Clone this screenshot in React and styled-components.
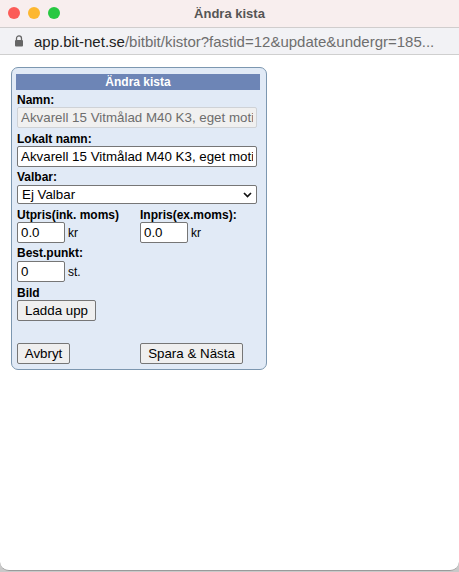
import styled, { createGlobalStyle } from "styled-components";

const GlobalStyle = createGlobalStyle`
  html, body {
    margin: 0;
    padding: 0;
    background: #c9c9c9;
  }
`;

const Window = styled.div`
  width: 459px;
  height: 571px;
  background: #fff;
  border-radius: 0 0 9px 9px;
  border-bottom: 1px solid #9a9a9a;
  box-sizing: border-box;
  overflow: hidden;
  font-family: "Liberation Sans", Arial, sans-serif;
`;

const TitleBar = styled.div`
  position: relative;
  height: 27px;
  background: #f8eeee;
  border-bottom: 1px solid #d0cdcd;
  display: flex;
  align-items: center;
  justify-content: center;
  font-size: 13px;
  font-weight: 700;
  color: #555;
`;

const Lights = styled.div`
  position: absolute;
  left: 8px;
  top: 7px;
  display: flex;
  gap: 8px;
`;

const Light = styled.span`
  width: 12px;
  height: 12px;
  border-radius: 50%;
  background: ${(props) => props.color};
`;

const UrlBar = styled.div`
  height: 27px;
  background: #f2f2f5;
  border-bottom: 1px solid #cfcfcf;
  box-sizing: border-box;
  display: flex;
  align-items: center;
  padding-left: 14px;
  gap: 10px;
  font-size: 15px;
  color: #6e6e6e;
  white-space: nowrap;
`;

const Host = styled.span`
  color: #222;
`;

const Content = styled.div`
  padding: 12px 11px;
`;

const Panel = styled.form`
  width: 256px;
  height: 303px;
  box-sizing: border-box;
  background: #e1eaf6;
  border: 1px solid #7c97b0;
  border-radius: 7px;
  padding: 6px 6px 0 4px;
  font-size: 12px;
  color: #000;
`;

const Heading = styled.div`
  height: 16px;
  line-height: 16px;
  background: #6d85b6;
  color: #fff;
  font-weight: 700;
  text-align: center;
`;

const Label = styled.div`
  font-weight: 700;
  line-height: 13px;
  margin-top: ${(props) => props.$top}px;
  margin-bottom: ${(props) => props.$bottom || 0}px;
  padding-left: 1px;
`;

const TextField = styled.input`
  display: block;
  box-sizing: border-box;
  width: 240px;
  height: 21px;
  margin: 0 0 0 1px;
  padding: 0 3px;
  font: 13.33px "Liberation Sans", Arial, sans-serif;
  color: #000;
  background: #fff;
  border: 1px solid #767676;
  border-radius: 2px;

  &:disabled {
    color: #6d6d6d;
    background: #f0f0f0;
    border-color: #cfd2d6;
  }
`;

const Select = styled.div`
  box-sizing: border-box;
  display: flex;
  align-items: center;
  justify-content: space-between;
  width: 240px;
  height: 19px;
  margin-left: 1px;
  padding: 0 4px 0 4px;
  font-size: 13.33px;
  background: #fff;
  border: 1px solid #767676;
  border-radius: 2px;
`;

const Columns = styled.div`
  display: grid;
  grid-template-columns: 123px 1fr;
`;

const Field = styled.div`
  display: flex;
  flex-direction: column;
`;

const InputRow = styled.div`
  display: flex;
  align-items: center;
  gap: 3px;
  font-size: 12px;
`;

const SmallField = styled(TextField)`
  width: 48px;
`;

const Button = styled.button`
  box-sizing: border-box;
  height: 21px;
  width: ${(props) => props.$width}px;
  padding: 0;
  font: 13.33px "Liberation Sans", Arial, sans-serif;
  color: #000;
  background: #efefef;
  border: 1px solid #767676;
  border-radius: 2px;
`;

const UploadButton = styled(Button)`
  display: block;
  margin-left: 1px;
`;

const Actions = styled.div`
  display: grid;
  grid-template-columns: 123px auto;
  justify-content: start;
  justify-items: start;
  margin-top: 22px;
  padding-left: 1px;
`;

function App() {
  return (
    <>
      <GlobalStyle />
      <Window>
        <TitleBar>
          <Lights>
            <Light color="#fc5b57" />
            <Light color="#fdb72f" />
            <Light color="#27c841" />
          </Lights>
          Ändra kista
        </TitleBar>
        <UrlBar>
          <svg width="10" height="12" viewBox="0 0 10 12">
            <path d="M2.5 5V3.4a2.5 2.5 0 0 1 5 0V5" fill="none" stroke="#666" strokeWidth="1.3" />
            <rect x="1" y="5" width="8" height="6.5" rx="1" fill="#666" />
          </svg>
          <span>
            <Host>app.bit-net.se</Host>/bitbit/kistor?fastid=12&amp;update&amp;undergr=185...
          </span>
        </UrlBar>
        <Content>
          <Panel>
            <Heading>Ändra kista</Heading>
            <Label $top={4}>Namn:</Label>
            <TextField disabled defaultValue="Akvarell 15 Vitmålad M40 K3, eget motiv" />
            <Label $top={5}>Lokalt namn:</Label>
            <TextField defaultValue="Akvarell 15 Vitmålad M40 K3, eget motiv" />
            <Label $top={4} $bottom={1}>Valbar:</Label>
            <Select>
              Ej Valbar
              <svg width="9" height="6" viewBox="0 0 9 6">
                <path d="M1 1l3.5 3.5L8 1" fill="none" stroke="#111" strokeWidth="1.7" />
              </svg>
            </Select>
            <Columns>
              <Field>
                <Label $top={5}>Utpris(ink. moms)</Label>
                <InputRow>
                  <SmallField defaultValue="0.0" />
                  <span>kr</span>
                </InputRow>
              </Field>
              <Field>
                <Label $top={5}>Inpris(ex.moms):</Label>
                <InputRow>
                  <SmallField defaultValue="0.0" />
                  <span>kr</span>
                </InputRow>
              </Field>
            </Columns>
            <Label $top={4} $bottom={1}>Best.punkt:</Label>
            <InputRow>
              <SmallField defaultValue="0" />
              <span>st.</span>
            </InputRow>
            <Label $top={5}>Bild</Label>
            <UploadButton type="button" $width={79}>Ladda upp</UploadButton>
            <Actions>
              <Button type="button" $width={53}>Avbryt</Button>
              <Button type="button" $width={103}>Spara &amp; Nästa</Button>
            </Actions>
          </Panel>
        </Content>
      </Window>
    </>
  );
}

export default App;
